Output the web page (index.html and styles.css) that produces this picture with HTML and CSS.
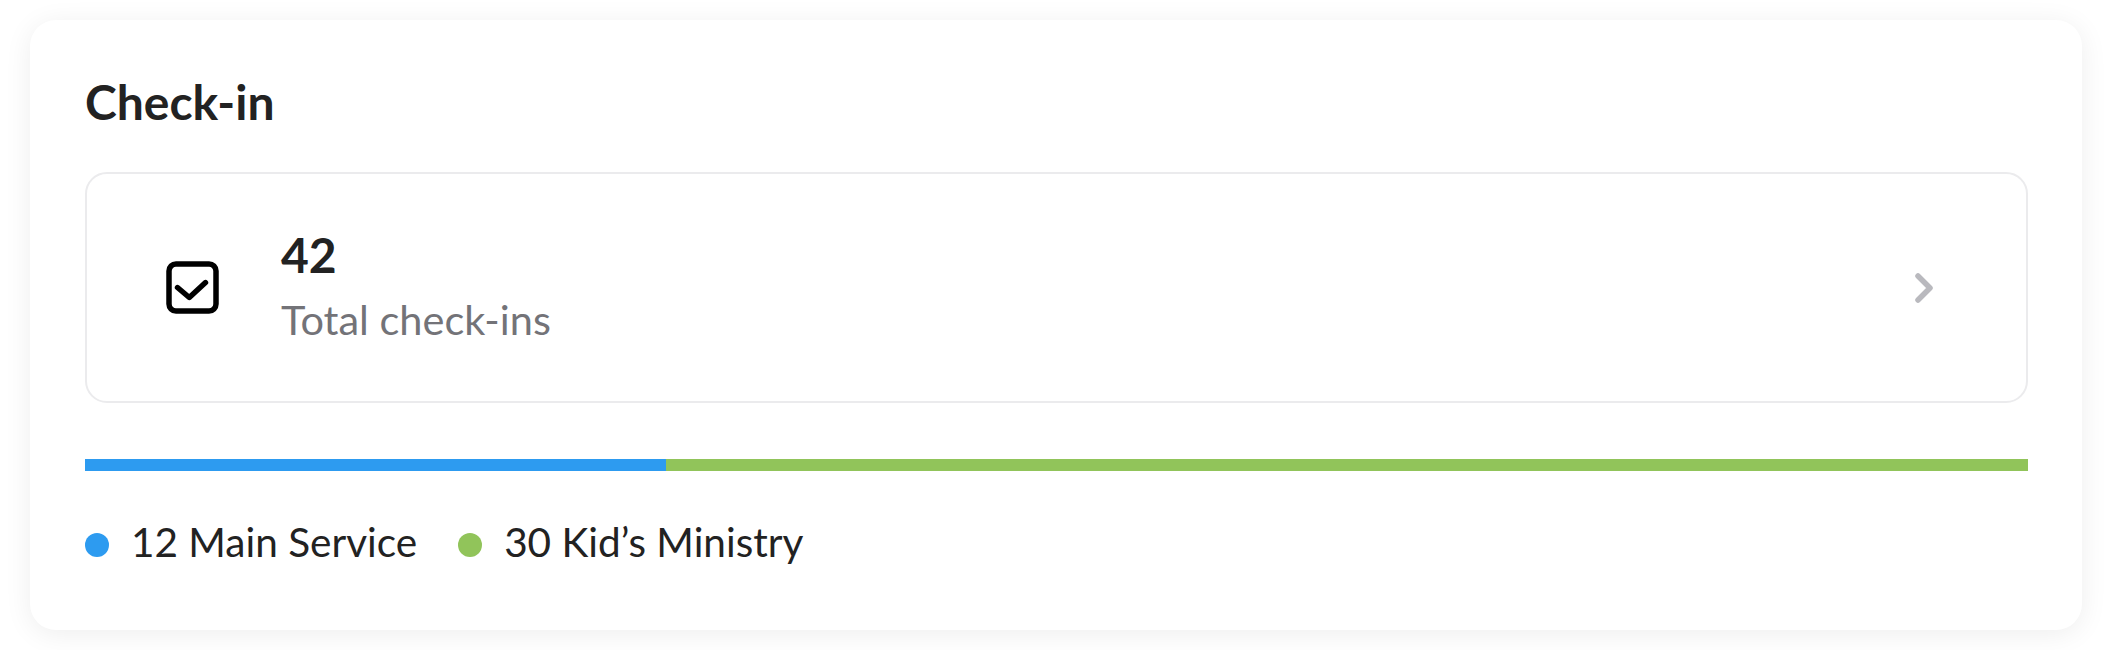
FILE: index.html
```html
<!DOCTYPE html>
<html lang="en">
<head>
<meta charset="utf-8">
<title>Check-in</title>
<link rel="stylesheet" href="styles.css">
</head>
<body>
<section class="card">
  <h2 class="card-title">Check-in</h2>
  <a class="stat" href="#">
    <svg class="stat-icon" width="53" height="53" viewBox="0 0 53 53" aria-hidden="true">
      <rect x="3" y="3" width="47" height="47" rx="7" fill="none" stroke="#000" stroke-width="5.5"/>
      <path d="M11.5 26.5 L23.3 36.5 L39.5 21.5" fill="none" stroke="#000" stroke-width="5.4" stroke-linecap="round" stroke-linejoin="round"/>
    </svg>
    <div class="stat-text">
      <div class="stat-value">42</div>
      <div class="stat-label">Total check-ins</div>
    </div>
    <svg class="stat-chevron" width="18" height="30" viewBox="0 0 18 30" aria-hidden="true">
      <path d="M3 3 L15 15 L3 27" fill="none" stroke="#b9b9be" stroke-width="5.5" stroke-linecap="round" stroke-linejoin="round"/>
    </svg>
  </a>
  <div class="bar">
    <div class="bar-seg bar-blue" style="width: 29.9%"></div>
    <div class="bar-seg bar-green"></div>
  </div>
  <ul class="legend">
    <li class="legend-item"><span class="dot dot-blue"></span>12 Main Service</li>
    <li class="legend-item"><span class="dot dot-green"></span>30 Kid’s Ministry</li>
  </ul>
</section>
</body>
</html>
```

FILE: styles.css
```css
html, body {
  margin: 0;
  padding: 0;
  background: #ffffff;
}
body {
  padding: 20px 30px;
  font-family: Lato, "Open Sans", "Liberation Sans", sans-serif;
  color: #222222;
}
.card {
  box-sizing: border-box;
  width: 2052px;
  height: 610px;
  background: #ffffff;
  border-radius: 26px;
  box-shadow: 0 4px 28px rgba(0, 0, 0, 0.07);
  padding: 54px 54px 0 55px;
  display: flex;
  flex-direction: column;
}
.card-title {
  margin: 0;
  font-size: 48px;
  line-height: 56px;
  font-weight: 700;
  color: #222222;
}
.stat {
  margin-top: 42px;
  box-sizing: border-box;
  height: 231px;
  border: 2px solid #ebebed;
  border-radius: 22px;
  display: flex;
  align-items: center;
  padding: 0 93px 0 79px;
  text-decoration: none;
  color: inherit;
}
.stat-icon {
  flex: none;
  display: block;
}
.stat-text {
  margin-left: 62px;
  display: flex;
  flex-direction: column;
  padding-bottom: 4px;
}
.stat-value {
  font-size: 48px;
  line-height: 48px;
  font-weight: 700;
  color: #222222;
}
.stat-label {
  margin-top: 20px;
  font-size: 41.5px;
  line-height: 41px;
  font-weight: 400;
  color: #737378;
}
.stat-chevron {
  margin-left: auto;
  flex: none;
  display: block;
}
.bar {
  margin-top: 56px;
  height: 12px;
  display: flex;
}
.bar-seg {
  height: 100%;
}
.bar-blue {
  background: #2d9bf0;
}
.bar-green {
  flex: 1;
  background: #91c45a;
}
.legend {
  list-style: none;
  margin: 47px 0 0;
  padding: 0;
  display: flex;
  gap: 41px;
}
.legend-item {
  display: flex;
  align-items: center;
  gap: 22px;
  font-size: 40.5px;
  line-height: 48px;
  color: #222222;
}
.dot {
  width: 24px;
  height: 24px;
  border-radius: 50%;
  margin-top: 6px;
  flex: none;
}
.dot-blue {
  background: #2d9bf0;
}
.dot-green {
  background: #91c45a;
}
```
